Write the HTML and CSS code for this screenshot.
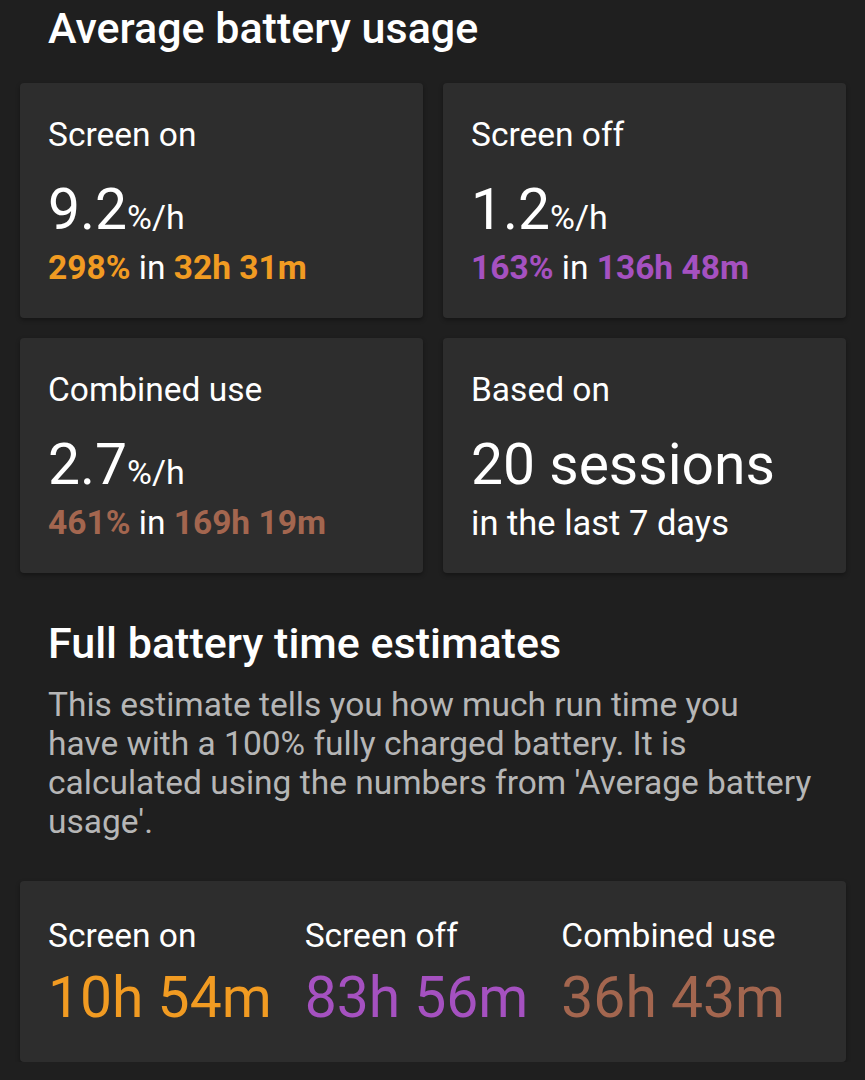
FILE: index.html
```html
<!DOCTYPE html>
<html lang="en">
<head>
    <meta charset="UTF-8">
    <meta name="viewport" content="width=device-width, initial-scale=1.0">
    <title>Battery usage</title>
    <link rel="stylesheet" href="styles.css">
</head>

<body>
    <div class="page">
        <h2 class="section-title">Average battery usage</h2>

        <!-- usage cards -->
        <div class="usage-grid">
            <div class="card">
                <div class="label">Screen on</div>
                <div class="value">9.2<span class="unit">%/h</span></div>
                <div class="sub"><b class="orange">298%</b> in <b class="orange">32h 31m</b></div>
            </div>
            <div class="card">
                <div class="label">Screen off</div>
                <div class="value">1.2<span class="unit">%/h</span></div>
                <div class="sub"><b class="purple">163%</b> in <b class="purple">136h 48m</b></div>
            </div>
            <div class="card">
                <div class="label">Combined use</div>
                <div class="value">2.7<span class="unit">%/h</span></div>
                <div class="sub"><b class="brown">461%</b> in <b class="brown">169h 19m</b></div>
            </div>
            <div class="card">
                <div class="label">Based on</div>
                <div class="value">20 sessions</div>
                <div class="sub plain">in the last 7 days</div>
            </div>
        </div>

        <h2 class="section-title second">Full battery time estimates</h2>
        <p class="desc">This estimate tells you how much run time you<br>
            have with a 100% fully charged battery. It is<br>
            calculated using the numbers from 'Average battery<br>
            usage'.</p>

        <!-- estimates -->
        <div class="card estimates">
            <div class="est">
                <div class="label">Screen on</div>
                <div class="value orange">10h 54m</div>
            </div>
            <div class="est">
                <div class="label">Screen off</div>
                <div class="value purple">83h 56m</div>
            </div>
            <div class="est">
                <div class="label">Combined use</div>
                <div class="value brown">36h 43m</div>
            </div>
        </div>
    </div>
</body>

</html>
```

FILE: styles.css
```css
* {
    margin: 0;
    padding: 0;
    box-sizing: border-box;
}

body {
    background-color: #1f1f1f;
    color: #fff;
    font-family: Roboto, "Noto Sans", sans-serif;
}

.page {
    padding: 3px 19px 0 20px;
}

.section-title {
    font-size: 43px;
    font-weight: 500;
    line-height: 50px;
    padding-left: 28px;
}

.section-title.second {
    margin-top: 45px;
}

.usage-grid {
    display: grid;
    grid-template-columns: 1fr 1fr;
    gap: 20px;
    margin-top: 30px;
}

.card {
    background-color: #2d2d2d;
    border-radius: 4px;
    box-shadow: 0 2px 4px rgba(0, 0, 0, .35);
    padding: 32px 28px 29px;
    height: 235px;
}

.label {
    font-size: 33.5px;
    line-height: 40px;
}

.value {
    font-size: 57px;
    line-height: 64px;
    margin-top: 23px;
}

.unit {
    font-size: 34px;
    line-height: 1;
}

.sub {
    font-size: 33.5px;
    line-height: 40px;
    margin-top: 6px;
}

.sub b {
    font-weight: 700;
}

.sub.plain {
    font-size: 34.5px;
}

.orange {
    color: #f19b22;
}

.purple {
    color: #a551c0;
}

.brown {
    color: #a3664f;
}

.desc {
    color: #b6b6b6;
    font-size: 33.5px;
    line-height: 39px;
    padding-left: 28px;
    margin-top: 17px;
}

/* estimates card */
.estimates {
    display: grid;
    grid-template-columns: 1fr 1fr 1fr;
    margin-top: 40px;
    height: 181px;
    padding: 35px 28px 32px;
}

.estimates .value {
    margin-top: 10px;
}
```
